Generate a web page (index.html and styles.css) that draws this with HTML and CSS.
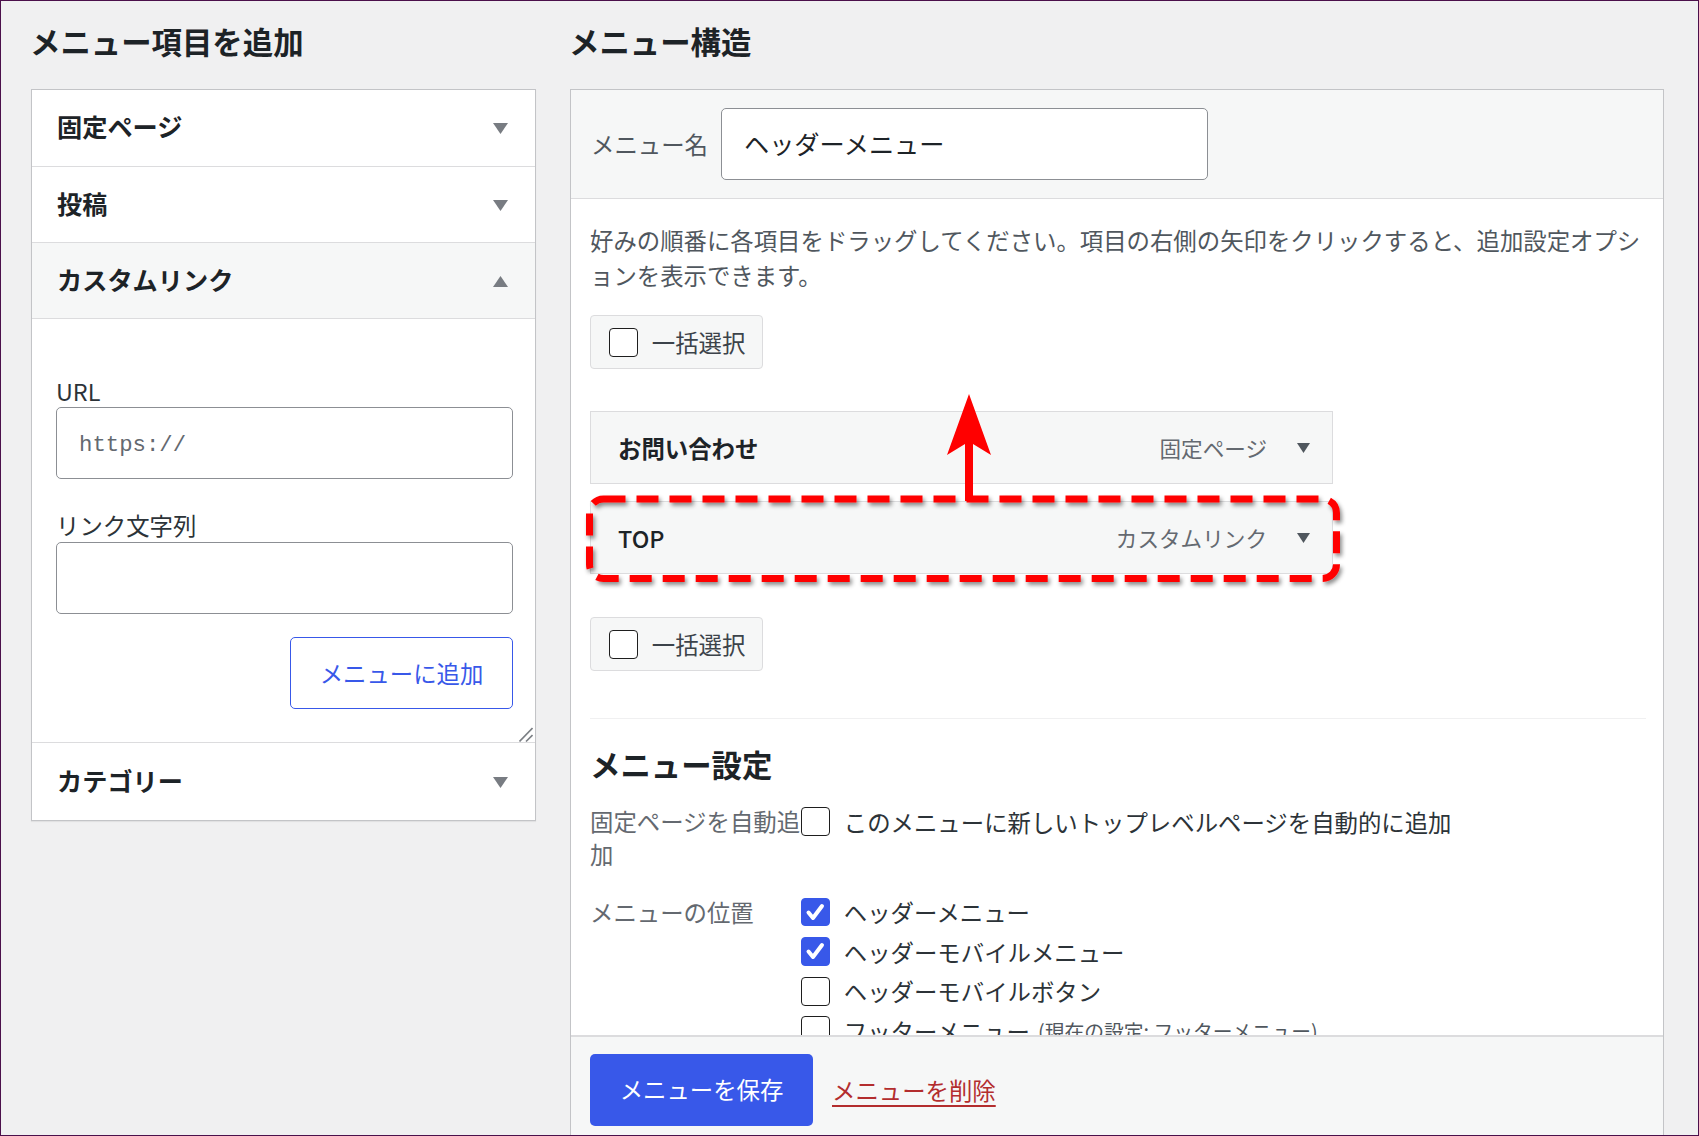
FILE: index.html
```html
<!DOCTYPE html>
<html lang="ja">

<head>
    <meta charset="UTF-8">
    <title>メニュー</title>
    <link rel="stylesheet" href="styles.css">
</head>

<body>
    <div class="frame">
        <div class="columns">
            <!-- 左: メニュー項目を追加 -->
            <div class="col-left">
                <h2 class="col-title">メニュー項目を追加</h2>
                <div class="accordion">
                    <div class="acc-head first">
                        <span>固定ページ</span>
                        <svg class="acc-arrow" width="15" height="11" viewBox="0 0 15 11"><polygon points="0,0 15,0 7.5,11"/></svg>
                    </div>
                    <div class="acc-head">
                        <span>投稿</span>
                        <svg class="acc-arrow" width="15" height="11" viewBox="0 0 15 11"><polygon points="0,0 15,0 7.5,11"/></svg>
                    </div>
                    <div class="acc-head open">
                        <span>カスタムリンク</span>
                        <svg class="acc-arrow" width="15" height="11" viewBox="0 0 15 11"><polygon points="0,11 15,11 7.5,0"/></svg>
                    </div>
                    <div class="acc-body">
                        <label class="field-label">URL</label>
                        <input class="text-input mono" type="text" placeholder="https://">
                        <label class="field-label second">リンク文字列</label>
                        <input class="text-input" type="text">
                        <div class="add-row">
                            <span class="btn-outline">メニューに追加</span>
                        </div>
                        <svg class="grip" width="14" height="15" viewBox="0 0 14 15">
                            <line x1="0.5" y1="14.5" x2="13.5" y2="1"/>
                            <line x1="7" y1="14.5" x2="13.5" y2="8"/>
                        </svg>
                    </div>
                    <div class="acc-head last">
                        <span>カテゴリー</span>
                        <svg class="acc-arrow" width="15" height="11" viewBox="0 0 15 11"><polygon points="0,0 15,0 7.5,11"/></svg>
                    </div>
                </div>
            </div>

            <!-- 右: メニュー構造 -->
            <div class="col-right">
                <h2 class="col-title">メニュー構造</h2>
                <div class="menu-panel">
                    <div class="menu-head">
                        <span class="name-label">メニュー名</span>
                        <div class="name-input">ヘッダーメニュー</div>
                    </div>
                    <div class="menu-body">
                        <p class="desc">好みの順番に各項目をドラッグしてください。項目の右側の矢印をクリックすると、追加設定オプションを表示できます。</p>
                        <div class="bulk"><span class="cb"></span>一括選択</div>

                        <div class="item">
                            <span class="item-title">お問い合わせ</span>
                            <span class="item-type">固定ページ</span>
                            <svg class="item-arrow" width="13" height="10" viewBox="0 0 13 10"><polygon points="0,0 13,0 6.5,10"/></svg>
                        </div>
                        <div class="item second">
                            <span class="item-title latin">TOP</span>
                            <span class="item-type">カスタムリンク</span>
                            <svg class="item-arrow" width="13" height="10" viewBox="0 0 13 10"><polygon points="0,0 13,0 6.5,10"/></svg>
                        </div>

                        <div class="bulk bulk-bottom"><span class="cb"></span>一括選択</div>

                        <div class="settings">
                            <h3 class="settings-title">メニュー設定</h3>
                            <div class="set-row">
                                <div class="set-label">固定ページを自動追加</div>
                                <div class="set-options auto">
                                    <div class="opt"><span class="cb"></span>このメニューに新しいトップレベルページを自動的に追加</div>
                                </div>
                            </div>
                            <div class="set-row location">
                                <div class="set-label">メニューの位置</div>
                                <div class="set-options">
                                    <div class="opt"><span class="cb checked"><svg width="27" height="27" viewBox="0 0 27 27"><polyline points="6.5,13.5 11,19 20,7"/></svg></span>ヘッダーメニュー</div>
                                    <div class="opt"><span class="cb checked"><svg width="27" height="27" viewBox="0 0 27 27"><polyline points="6.5,13.5 11,19 20,7"/></svg></span>ヘッダーモバイルメニュー</div>
                                    <div class="opt"><span class="cb"></span>ヘッダーモバイルボタン</div>
                                    <div class="opt"><span class="cb"></span>フッターメニュー<span class="loc-note">(現在の設定: フッターメニュー)</span></div>
                                </div>
                            </div>
                        </div>
                    </div>
                    <div class="menu-foot">
                        <span class="btn-primary">メニューを保存</span>
                        <a class="delete-link" href="#">メニューを削除</a>
                    </div>
                </div>
            </div>
        </div>

        <!-- 注釈: 赤い点線と矢印 -->
        <svg class="marks" width="1699" height="1136" viewBox="0 0 1699 1136">
            <defs>
                <filter id="shadow" x="-5%" y="-30%" width="110%" height="160%">
                    <feDropShadow dx="2" dy="3" stdDeviation="2" flood-color="#000" flood-opacity="0.45"/>
                </filter>
            </defs>
            <rect x="589.5" y="499" width="747" height="79.5" rx="14" fill="none" stroke="#ff0000" stroke-width="7" stroke-dasharray="22 11" filter="url(#shadow)"/>
            <polygon points="969,394 991,455 973,444 973,501 965,501 965,444 947,455" fill="#ff0000"/>
        </svg>
    </div>
</body>

</html>
```

FILE: styles.css
```css
* {
    box-sizing: border-box;
}

body {
    margin: 0;
    background: #fff;
    font-family: "Noto Sans CJK JP", "Noto Sans", sans-serif;
    color: #1d2327;
}

.frame {
    position: relative;
    width: 1699px;
    height: 1136px;
    border: 1px solid #4b104b;
    background: #f0f0f1;
    overflow: hidden;
}

.columns {
    display: flex;
    gap: 34px;
    padding: 20.6px 0 0 30px;
}

.col-left {
    width: 505px;
    flex: none;
}

.col-right {
    width: 1094px;
    flex: none;
}

.col-title {
    margin: -2px 0 26.8px -1px;
    font-size: 30.4px;
    line-height: 42.56px;
    font-weight: 700;
    color: #1d2327;
}

/* accordion */
.accordion {
    background: #fff;
    border: 1px solid #c3c4c7;
    box-shadow: 0 1px 1px rgba(0, 0, 0, .06);
}

.acc-head {
    display: flex;
    align-items: center;
    justify-content: space-between;
    height: 76px;
    padding: 0 27px 3px 25px;
    border-bottom: 1px solid #dcdcde;
    font-size: 25.2px;
    font-weight: 700;
    color: #1d2327;
}

.acc-head.first {
    height: 77px;
}

.acc-head.open {
    background: #f6f7f7;
}

.acc-head.last {
    height: 77px;
    border-bottom: none;
}

.acc-arrow {
    fill: #787c82;
    margin-top: 5px;
}

.acc-body {
    position: relative;
    height: 424px;
    padding: 55.6px 22px 0 24px;
    border-bottom: 1px solid #dcdcde;
}

.field-label {
    display: block;
    font-size: 23.4px;
    line-height: 32.76px;
    color: #2c3338;
}

.field-label.second {
    margin-top: 29.7px;
}

.text-input {
    display: block;
    width: 100%;
    height: 72px;
    margin: 0;
    padding: 0 22px;
    border: 1px solid #8c8f94;
    border-radius: 5px;
    background: #fff;
    font-family: "Noto Sans CJK JP", sans-serif;
    font-size: 25.2px;
    color: #1d2327;
}

.text-input.mono {
    padding-top: 4px;
    font-family: "Liberation Mono", "DejaVu Sans Mono", monospace;
    font-size: 22.3px;
}

.text-input::placeholder {
    color: #646970;
}

.add-row {
    display: flex;
    justify-content: flex-end;
    margin-top: 23.5px;
}

.btn-outline {
    display: flex;
    align-items: center;
    justify-content: center;
    width: 223px;
    height: 72px;
    border: 1px solid #3858e9;
    border-radius: 5px;
    background: #fff;
    color: #3858e9;
    font-size: 23.4px;
}

.grip {
    position: absolute;
    right: 2px;
    bottom: 0;
    stroke: #7b7f84;
    stroke-width: 1.6;
}

/* right panel */
.menu-panel {
    background: #fff;
    border: 1px solid #c3c4c7;
}

.menu-head {
    display: flex;
    align-items: center;
    gap: 13px;
    padding: 18px 20px;
    background: #f6f7f7;
    border-bottom: 1px solid #dcdcde;
}

.name-label {
    font-size: 23.4px;
    color: #50575e;
}

.name-input {
    display: flex;
    align-items: center;
    width: 487px;
    height: 72px;
    padding: 0 22px 2px;
    border: 1px solid #8c8f94;
    border-radius: 5px;
    background: #fff;
    font-size: 25.2px;
    color: #1d2327;
}

.menu-body {
    height: 836px;
    overflow: hidden;
    padding: 24px 10px 0 19px;
}

.desc {
    margin: 0;
    font-size: 23.4px;
    line-height: 35.1px;
    color: #50575e;
}

.cb {
    display: inline-block;
    flex: none;
    width: 28.8px;
    height: 28.8px;
    border: 1px solid #1e1e1e;
    border-radius: 4px;
    background: #fff;
}

.cb.checked {
    background: #3858e9;
    border-color: #3858e9;
}

.cb.checked svg {
    display: block;
    fill: none;
    stroke: #fff;
    stroke-width: 4;
    stroke-linecap: round;
    stroke-linejoin: round;
}

.bulk {
    display: flex;
    align-items: center;
    gap: 14px;
    width: 173px;
    height: 54px;
    margin-top: 22px;
    padding-left: 18px;
    background: #f6f7f7;
    border: 1px solid #dcdcde;
    border-radius: 4px;
    font-size: 23.4px;
    color: #3c434a;
}

.bulk-bottom {
    margin-top: 43px;
}

.item {
    display: flex;
    align-items: center;
    width: 743px;
    height: 73px;
    margin-top: 42px;
    padding: 0 22px 0 27px;
    border: 1px solid #dcdcde;
    background: #f6f7f7;
}

.item.second {
    margin-top: 17px;
}

.item-title {
    flex: 1;
    font-size: 23.4px;
    font-weight: 700;
    color: #1d2327;
}

.item-title.latin {
    font-weight: 500;
}

.item-type {
    margin-right: 30px;
    font-size: 21.6px;
    color: #646970;
}

.item-arrow {
    fill: #50575e;
}

/* settings */
.settings {
    width: 1056px;
    margin-top: 47px;
    padding-top: 23.6px;
    border-top: 1px solid #f0f0f1;
}

.settings-title {
    margin: 0;
    font-size: 30.4px;
    line-height: 42.56px;
    font-weight: 700;
    color: #1d2327;
}

.set-row {
    display: flex;
    margin-top: 19.5px;
}

.set-row.location {
    margin-top: 26px;
}

.set-label {
    width: 211px;
    flex: none;
    font-size: 23.4px;
    line-height: 32.76px;
    color: #646970;
}

.set-options {
    padding-top: 1.3px;
}

.set-options.auto {
    padding-top: 2.3px;
}

.opt {
    display: flex;
    align-items: center;
    gap: 14px;
    height: 28.8px;
    margin-bottom: 10.8px;
    font-size: 23.4px;
    color: #2c3338;
    white-space: nowrap;
}

.loc-note {
    margin-left: -6px;
    font-size: 19.8px;
    color: #50575e;
}

/* footer */
.menu-foot {
    display: flex;
    align-items: center;
    padding: 17px 19px 30px;
    background: #f6f7f7;
    border-top: 2px solid #dcdcde;
}

.btn-primary {
    display: flex;
    align-items: center;
    justify-content: center;
    width: 223px;
    height: 72px;
    padding-bottom: 2px;
    border-radius: 5px;
    background: #3858e9;
    color: #fff;
    font-size: 23.4px;
}

.delete-link {
    margin-left: 19px;
    font-size: 23.4px;
    color: #b32d2e;
    text-decoration: underline;
    text-decoration-thickness: 2px;
    text-underline-offset: 5px;
}

/* annotation overlay */
.marks {
    position: absolute;
    left: -1px;
    top: -1px;
    pointer-events: none;
}
```
